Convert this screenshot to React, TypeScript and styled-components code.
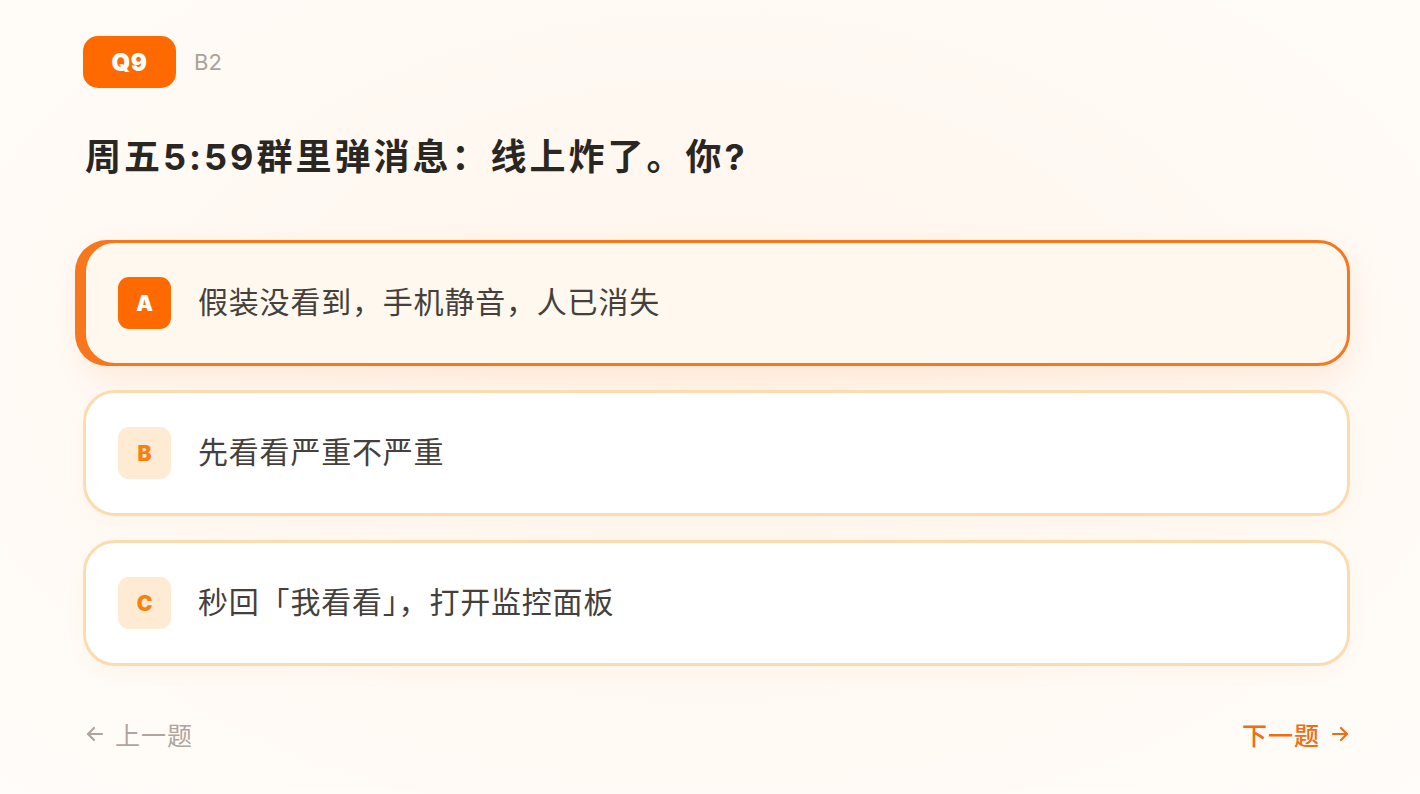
import React from "react";
import styled, { createGlobalStyle } from "styled-components";

const Global = createGlobalStyle`
  html, body { margin: 0; padding: 0; }
  body {
    background: #fff9f3;
    font-family: "Inter", "Noto Sans CJK SC", sans-serif;
    -webkit-font-smoothing: antialiased;
  }
`;

const Page = styled.div`
  min-height: 794px;
  box-sizing: border-box;
  padding: 36px 70px 0 83px;
  background: radial-gradient(ellipse at 50% 45%, #fff6ec 0%, #fffaf5 70%, #fffcf9 100%);
  display: flex;
  flex-direction: column;
`;

const Header = styled.div`
  display: flex;
  align-items: center;
  gap: 18px;
`;

const QBadge = styled.div`
  width: 93px;
  height: 52px;
  border-radius: 15px;
  background: #ff6a00;
  color: #fff;
  font-family: "Inter", sans-serif;
  font-weight: 900;
  font-size: 24px;
  display: flex;
  align-items: center;
  justify-content: center;
  letter-spacing: 0.5px;
`;

const Level = styled.span`
  color: #aaa29c;
  font-family: "Inter", sans-serif;
  font-size: 22px;
  font-weight: 400;
`;

const Title = styled.h1`
  margin: 44px 0 0 2px;
  font-size: 36px;
  line-height: 50px;
  font-weight: 700;
  color: #2a2622;
  letter-spacing: 3px;
  font-family: "Inter", "Noto Sans CJK SC", sans-serif;
`;

const Options = styled.div`
  margin-top: 58px;
  display: flex;
  flex-direction: column;
  gap: 24px;
`;

const Card = styled.div<{ $selected?: boolean }>`
  height: 126px;
  box-sizing: border-box;
  border-radius: 32px;
  border: 3px solid ${(p) => (p.$selected ? "#f7771f" : "#fbdcae")};
  background: ${(p) => (p.$selected ? "#fff8ee" : "#ffffff")};
  box-shadow: ${(p) =>
    p.$selected
      ? "-8px 0 0 0 #f7771f, 0 12px 32px rgba(247, 119, 31, 0.12)"
      : "0 6px 18px rgba(247, 160, 80, 0.05)"};
  display: flex;
  align-items: center;
  padding-left: 32px;
  gap: 27px;
`;

const Letter = styled.div<{ $selected?: boolean }>`
  width: 53px;
  height: 52px;
  border-radius: 11px;
  background: ${(p) => (p.$selected ? "#ff6a00" : "#ffebd3")};
  color: ${(p) => (p.$selected ? "#ffffff" : "#f5820f")};
  font-family: "Inter", sans-serif;
  font-weight: 900;
  font-size: 21px;
  display: flex;
  align-items: center;
  justify-content: center;
  flex-shrink: 0;
`;

const OptionText = styled.span`
  font-size: 30px;
  line-height: 40px;
  padding-bottom: 6px;
  letter-spacing: 0.8px;
  color: #45403c;
  font-family: "Noto Sans CJK SC", sans-serif;
  font-weight: 400;
`;

const Nav = styled.div`
  margin-top: 50px;
  display: flex;
  justify-content: space-between;
  align-items: center;
  padding-left: 2px;
`;

const NavButton = styled.span<{ $primary?: boolean }>`
  font-size: 25px;
  letter-spacing: 1px;
  color: ${(p) => (p.$primary ? "#f26c12" : "#b0a59d")};
  font-family: "Noto Sans CJK SC", sans-serif;
  font-weight: ${(p) => (p.$primary ? 500 : 400)};
  display: flex;
  align-items: center;
  gap: 10px;
`;

const Arrow = ({ dir }: { dir: "left" | "right" }) => (
  <svg width="20" height="20" viewBox="0 0 20 20" fill="none" stroke="currentColor" strokeWidth="2.2" strokeLinecap="round" strokeLinejoin="round">
    {dir === "left" ? (
      <>
        <path d="M17 10H3" />
        <path d="M9 4L3 10l6 6" />
      </>
    ) : (
      <>
        <path d="M3 10h14" />
        <path d="M11 4l6 6-6 6" />
      </>
    )}
  </svg>
);

const options = [
  { key: "A", text: "假装没看到，手机静音，人已消失", selected: true },
  { key: "B", text: "先看看严重不严重", selected: false },
  { key: "C", text: "秒回「我看看」，打开监控面板", selected: false },
];

export default function App() {
  return (
    <>
      <Global />
      <Page>
        <Header>
          <QBadge>Q9</QBadge>
          <Level>B2</Level>
        </Header>
        <Title>周五5:59群里弹消息：线上炸了。你?</Title>
        <Options>
          {options.map((o) => (
            <Card key={o.key} $selected={o.selected}>
              <Letter $selected={o.selected}>{o.key}</Letter>
              <OptionText>{o.text}</OptionText>
            </Card>
          ))}
        </Options>
        <Nav>
          <NavButton>
            <Arrow dir="left" />
            上一题
          </NavButton>
          <NavButton $primary>
            下一题
            <Arrow dir="right" />
          </NavButton>
        </Nav>
      </Page>
    </>
  );
}
